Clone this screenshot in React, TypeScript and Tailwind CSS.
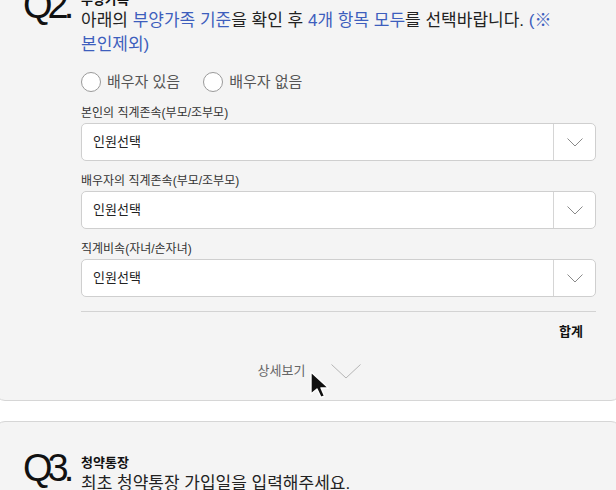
const font = "font-['Liberation_Sans','Noto_Sans_CJK_KR',sans-serif]";

// 인원선택 셀렉트 박스
function PersonSelect({ label }: { label: string }) {
    return (
        <div className="mt-3 first:mt-0">
            <div className="text-[12px] leading-4 text-[#333] mb-[2px]">{label}</div>
            <div className="h-[38px] flex bg-white border border-[#cfcfcf] rounded-[5px]">
                <div className="flex-1 flex items-center pl-[11px] text-[13px] text-[#222]">인원선택</div>
                <div className="w-[42px] border-l border-[#d5d5d5] flex items-center justify-center">
                    <svg width="16" height="9" viewBox="0 0 16 9" fill="none">
                        <path d="M0.5 0.5 L8 8 L15.5 0.5" stroke="#8a8a8a" strokeWidth="1" />
                    </svg>
                </div>
            </div>
        </div>
    );
}

function Radio({ label }: { label: string }) {
    return (
        <label className="flex items-center gap-[6px] text-[15px] leading-5 text-[#555]">
            <span className="w-5 h-5 rounded-full border-[1.5px] border-[#9a9a9a] bg-white" />
            {label}
        </label>
    );
}

function QLabel({ text }: { text: string }) {
    return (
        <div className="w-[58px] shrink-0 font-['Liberation_Sans',sans-serif] text-[38px] leading-none tracking-[-5px] text-[#111] -mt-[5px]">
            {text}
        </div>
    );
}

export default function App() {
    return (
        <div className={`${font} bg-white h-[490px] overflow-hidden`}>
            <div className="-mx-[5px] -mt-[42px]">
                {/* Q2 부양가족 */}
                <section className="bg-[#f4f4f4] border border-[#d6d6d6] rounded-[10px] pt-[32px] pb-[20px] pl-[27px] pr-[24px]">
                    <div className="flex">
                        <QLabel text="Q2." />
                        <div className="flex-1">
                            <div className="text-[13px] leading-[18px] font-bold text-[#111]">부양가족</div>
                            <p className="text-[17px] leading-6 text-[#222] pr-[30px]">
                                아래의 <span className="text-[#3d5ebd]">부양가족 기준</span>을 확인 후{' '}
                                <span className="text-[#3d5ebd]">4개 항목 모두</span>를 선택바랍니다.{' '}
                                <span className="text-[#3d5ebd]">(※ 본인제외)</span>
                            </p>

                            <div className="flex gap-[23px] mt-[15px]">
                                <Radio label="배우자 있음" />
                                <Radio label="배우자 없음" />
                            </div>

                            <div className="mt-[13px]">
                                <PersonSelect label="본인의 직계존속(부모/조부모)" />
                                <PersonSelect label="배우자의 직계존속(부모/조부모)" />
                                <PersonSelect label="직계비속(자녀/손자녀)" />
                            </div>

                            <div className="mt-[14px] border-t border-[#d3d3d3]" />
                            <div className="mt-[11px] pr-[13px] text-right text-[13px] leading-[18px] font-bold text-[#111]">합계</div>
                        </div>
                    </div>

                    <div className="relative mt-[21px] flex items-center justify-center gap-[26px] text-[13px] leading-[18px] text-[#666]">
                        <span>상세보기</span>
                        <svg width="30" height="15" viewBox="0 0 30 15" fill="none">
                            <path d="M0.5 0.5 L15 14 L29.5 0.5" stroke="#b5b5b5" strokeWidth="1" />
                        </svg>
                        {/* 마우스 커서 */}
                        <svg className="absolute left-[286px] top-[9px]" width="24" height="30" viewBox="0 0 24 30">
                            <path d="M2 1 L2 23 L8 18 L12 26.5 L15.5 25 L12 17 L19.5 17 Z" fill="#111" stroke="#fff" strokeWidth="1.4" strokeLinejoin="round" />
                        </svg>
                    </div>
                </section>

                <div className="h-[20px]" />

                {/* Q3 청약통장 */}
                <section className="bg-[#f4f4f4] border border-[#d6d6d6] rounded-[10px] pt-[32px] pb-[40px] pl-[27px] pr-[24px]">
                    <div className="flex">
                        <QLabel text="Q3." />
                        <div className="flex-1">
                            <div className="text-[13px] leading-[18px] font-bold text-[#111]">청약통장</div>
                            <p className="text-[17px] leading-6 text-[#222]">최초 청약통장 가입일을 입력해주세요.</p>
                        </div>
                    </div>
                </section>
            </div>
        </div>
    );
}
